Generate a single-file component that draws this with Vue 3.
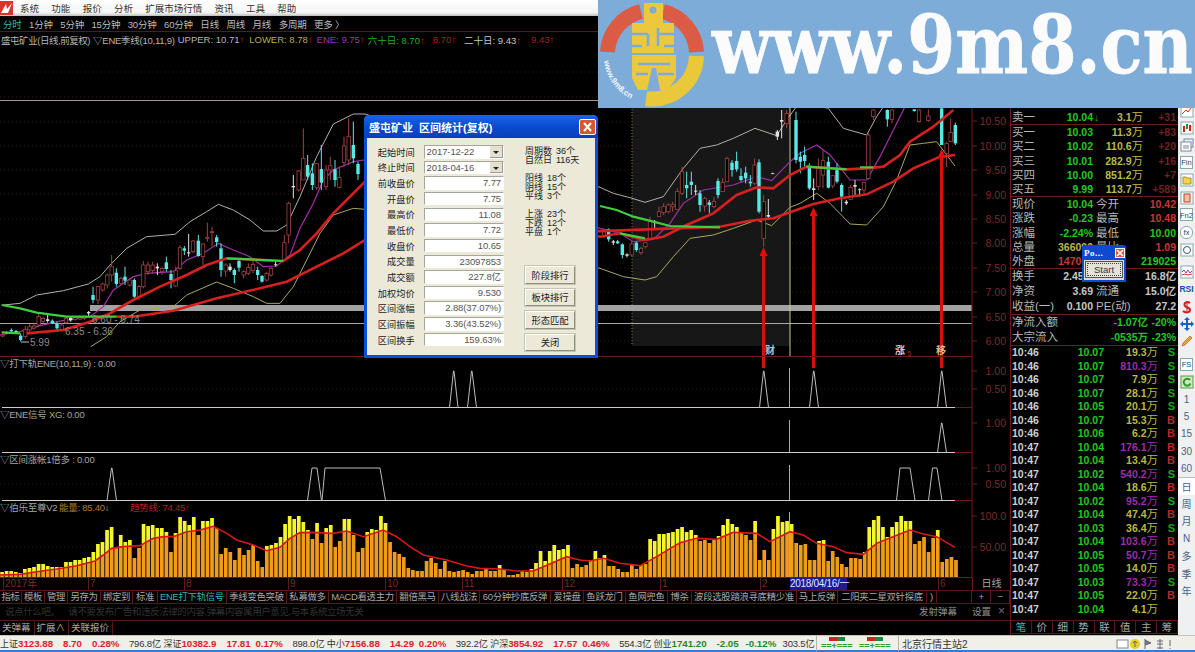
<script setup>
const menus = ['系统', '功能', '报价', '分析', '扩展市场行情', '资讯', '工具', '帮助']
const periods = ['1分钟', '5分钟', '15分钟', '30分钟', '60分钟', '日线', '周线', '月线', '多周期', '更多 〉']

// 坐标都是从放大图读出来的: 左半 x/3, 右半 600+x/3, y=100+y/3
const L = (x, y) => [x / 3, 100 + y / 3]
const R = (x, y) => [600 + x / 3, 100 + y / 3]
const poly = (left, right = []) =>
  [...left.map(p => L(p[0], p[1])), ...right.map(p => R(p[0], p[1]))].map(p => p.join(',')).join(' ')

const upper = poly(
  [[10, 615], [60, 610], [110, 585], [190, 572], [265, 552], [300, 530], [330, 495], [380, 445], [440, 410], [525, 403], [570, 365], [620, 335], [655, 313], [700, 330], [750, 360], [790, 393], [830, 393], [860, 375], [900, 290], [950, 170], [1000, 72], [1060, 42], [1095, 42]],
  [[0, 262], [40, 280], [90, 293], [135, 307], [190, 290], [250, 205], [300, 145], [350, 135], [400, 115], [465, 85], [530, 107], [560, 60], [600, 5], [685, 25], [730, 85], [800, 105], [830, 50], [850, 20]]
)
const lower = poly(
  [[272, 740], [320, 710], [360, 665], [420, 630], [520, 620], [560, 585], [650, 546], [700, 565], [760, 590], [800, 610], [840, 610], [880, 560], [920, 480], [960, 400], [1000, 345], [1060, 325], [1095, 328]],
  [[0, 505], [70, 530], [135, 540], [170, 530], [220, 470], [270, 415], [340, 405], [400, 385], [470, 360], [515, 377], [570, 322], [600, 310], [650, 280], [690, 310], [750, 372], [800, 375], [850, 320], [890, 240], [930, 135], [970, 130], [1010, 125], [1040, 165], [1065, 198]]
)
const mid = poly(
  [[0, 705], [60, 695], [110, 680], [170, 665], [270, 650], [310, 620], [340, 570], [400, 530], [440, 520], [520, 515], [560, 480], [610, 460], [655, 430], [700, 450], [750, 470], [790, 500], [830, 498], [870, 465], [900, 385], [940, 310], [970, 240], [1000, 210], [1060, 185], [1090, 180]],
  [[0, 385], [60, 400], [100, 425], [160, 418], [210, 370], [250, 310], [310, 270], [400, 255], [470, 230], [515, 242], [570, 185], [600, 160], [650, 135], [690, 165], [750, 240], [800, 240], [840, 170], [900, 50], [920, 10]]
)
const ma20 = poly(
  [[80, 700], [190, 690], [270, 665], [330, 640], [400, 600], [480, 560], [560, 525], [620, 495], [680, 475], [850, 483], [900, 450], [950, 400], [1000, 340], [1050, 290], [1095, 245]],
  [[0, 410], [60, 400], [130, 420], [190, 410], [260, 375], [340, 340], [410, 285], [470, 262], [520, 265], [570, 225], [620, 200], [740, 208], [800, 205], [850, 200], [900, 165], [930, 125], [1000, 80], [1060, 30]]
)
const ma60 = poly(
  [[350, 650], [400, 650], [520, 632], [650, 595], [780, 565], [860, 545], [950, 500], [1030, 460], [1095, 420]],
  [[360, 380], [450, 362], [520, 355], [640, 312], [720, 295], [800, 283], [880, 245], [940, 205], [1020, 170], [1065, 165]]
)
const greens = [
  poly([[5, 615], [60, 625], [110, 638], [200, 650], [270, 650], [350, 650]]),
  poly([[5, 697], [60, 700]]),
  poly([[680, 475], [850, 483]]),
  poly([], [[0, 318], [50, 330], [100, 350], [160, 365], [210, 378], [360, 382]]),
  poly([], [[60, 400], [135, 415]]),
  poly([], [[620, 200], [740, 208]]),
  poly([], [[780, 202], [820, 202]])
]

// [x, 影线上, 影线下, 实体上, 实体下, 类型]
const leftCandles = [
  [8, 700, 712, 704, 708, 'r'], [20, 693, 702, 696, 700, 'c'], [34, 685, 697, 690, 694, 'c'], [48, 690, 700, 693, 697, 'c'], [62, 700, 725, 707, 720, 'c'], [76, 678, 715, 688, 710, 'r'], [89, 672, 695, 680, 690, 'r'], [102, 670, 690, 678, 684, 'r'], [116, 640, 680, 650, 675, 'r'], [129, 650, 668, 655, 664, 'r'], [143, 642, 668, 658, 663, 'w'], [157, 658, 672, 662, 670, 'c'], [171, 665, 690, 670, 685, 'c'], [185, 670, 692, 675, 688, 'r'], [198, 650, 672, 655, 668, 'r'], [212, 650, 665, 654, 661, 'w'], [226, 650, 662, 653, 658, 'r'], [240, 650, 660, 652, 657, 'r'], [253, 648, 660, 651, 655, 'r'], [266, 633, 650, 636, 640, 'w'],
  [279, 560, 610, 585, 600, 'c'], [294, 558, 612, 560, 600, 'r'], [308, 548, 575, 552, 570, 'r'], [322, 520, 565, 525, 555, 'r'], [335, 465, 545, 500, 525, 'r'], [349, 505, 560, 518, 552, 'c'], [363, 530, 555, 535, 550, 'r'], [375, 500, 555, 530, 542, 'c'], [389, 535, 560, 540, 555, 'r'], [403, 535, 600, 540, 590, 'c'], [417, 555, 600, 560, 592, 'r'], [430, 483, 565, 495, 560, 'r'], [444, 485, 525, 495, 515, 'r'], [458, 485, 520, 495, 512, 'r'], [472, 490, 525, 500, 505, 'w'], [486, 500, 525, 505, 515, 'r'], [499, 470, 515, 487, 507, 'c'], [513, 510, 565, 522, 540, 'c'], [527, 500, 560, 512, 558, 'r'], [540, 435, 510, 443, 505, 'r'], [553, 438, 465, 445, 452, 'c'], [566, 402, 470, 457, 460, 'w'], [579, 420, 460, 423, 455, 'r'], [595, 405, 470, 422, 468, 'c'], [609, 430, 495, 432, 470, 'r'], [622, 368, 425, 412, 415, 'r'], [636, 380, 440, 395, 398, 'r'], [650, 405, 440, 412, 426, 'c'], [663, 430, 530, 445, 510, 'c'], [677, 490, 530, 495, 513, 'r'], [690, 490, 515, 500, 510, 'w'], [703, 505, 550, 510, 525, 'c'], [717, 478, 515, 483, 503, 'c'], [731, 510, 535, 515, 525, 'r'], [745, 490, 525, 502, 520, 'r'], [759, 480, 520, 493, 512, 'r'], [773, 500, 540, 510, 525, 'c'], [786, 525, 548, 528, 545, 'c'], [800, 515, 545, 520, 540, 'r'], [813, 500, 530, 505, 525, 'r'], [827, 480, 500, 493, 495, 'w'],
  [853, 405, 480, 428, 480, 'r'], [866, 305, 430, 310, 405, 'r'], [880, 225, 295, 258, 262, 'w'], [896, 210, 275, 213, 270, 'r'], [910, 85, 240, 175, 240, 'r'], [923, 165, 240, 195, 230, 'c'], [937, 190, 270, 220, 255, 'c'], [950, 190, 270, 190, 262, 'r'], [964, 135, 270, 207, 248, 'c'], [978, 195, 270, 210, 260, 'r'], [991, 170, 240, 197, 210, 'r'], [1005, 180, 260, 208, 240, 'c'], [1018, 200, 265, 232, 262, 'r'], [1032, 110, 200, 138, 188, 'r'], [1046, 55, 195, 110, 180, 'r'], [1060, 65, 190, 135, 175, 'c'], [1074, 185, 240, 192, 222, 'c']
]
const rightCandles = [
  [12, 385, 415, 395, 410, 'r'], [26, 385, 425, 388, 418, 'c'], [40, 420, 435, 424, 428, 'w'], [53, 420, 432, 424, 430, 'c'], [67, 430, 475, 433, 465, 'c'], [81, 460, 472, 463, 467, 'w'], [95, 425, 468, 432, 465, 'r'], [109, 425, 455, 428, 450, 'c'], [123, 440, 465, 445, 458, 'r'], [136, 425, 445, 428, 440, 'r'], [150, 350, 420, 365, 418, 'r'], [164, 360, 390, 365, 368, 'w'], [177, 320, 350, 335, 350, 'r'], [191, 310, 345, 320, 338, 'r'], [205, 310, 340, 315, 335, 'r'], [218, 305, 335, 313, 320, 'r'], [232, 265, 330, 275, 328, 'r'], [246, 200, 285, 215, 280, 'r'], [260, 215, 295, 255, 265, 'c'], [274, 215, 285, 245, 255, 'c'], [287, 255, 285, 272, 275, 'w'], [300, 270, 335, 280, 315, 'c'], [314, 290, 335, 295, 318, 'r'], [328, 300, 340, 307, 315, 'c'], [342, 290, 325, 305, 320, 'r'], [354, 235, 295, 243, 285, 'c'], [368, 235, 275, 248, 275, 'r'], [381, 170, 245, 175, 245, 'r'], [396, 180, 230, 188, 210, 'c'], [410, 155, 215, 183, 208, 'c'], [423, 205, 245, 228, 240, 'c'], [437, 200, 250, 218, 235, 'c'], [451, 225, 260, 245, 250, 'c'], [464, 175, 255, 195, 250, 'r'], [477, 178, 340, 187, 335, 'c'], [491, 285, 440, 305, 415, 'r'], [505, 297, 360, 345, 350, 'w'], [518, 218, 222, 220, 221, 'w'], [532, 90, 120, 95, 110, 'w'], [545, 30, 115, 60, 65, 'w'], [560, 30, 85, 40, 70, 'r'],
  [588, 35, 190, 60, 180, 'c'], [601, 155, 220, 170, 185, 'c'], [614, 140, 205, 165, 183, 'c'], [628, 190, 270, 203, 265, 'c'], [641, 235, 300, 265, 270, 'w'], [655, 175, 270, 205, 260, 'r'], [669, 150, 265, 182, 225, 'r'], [685, 170, 265, 185, 263, 'c'], [698, 225, 265, 227, 258, 'r'], [711, 190, 250, 205, 245, 'c'], [725, 250, 335, 255, 290, 'c'], [739, 300, 315, 305, 310, 'w'], [752, 255, 300, 262, 298, 'r'], [765, 240, 290, 255, 260, 'w'], [779, 265, 290, 268, 270, 'w'], [792, 245, 280, 248, 270, 'r'], [805, 100, 240, 105, 235, 'r'], [820, 28, 60, 30, 50, 'r'], [862, 28, 80, 30, 58, 'c'], [876, 28, 70, 30, 58, 'r'], [943, 28, 35, 28, 33, 'c'], [957, 28, 68, 30, 65, 'r'], [985, 28, 65, 48, 62, 'r'], [1025, 25, 135, 25, 135, 'c'], [1040, 125, 200, 130, 160, 'r'], [1052, 55, 125, 97, 125, 'r'], [1066, 68, 135, 75, 130, 'c']
]
const candles = [
  ...leftCandles.map(c => ({ x: c[0] / 3, wt: 100 + c[1] / 3, wb: 100 + c[2] / 3, bt: 100 + c[3] / 3, bb: 100 + c[4] / 3, t: c[5] })),
  ...rightCandles.map(c => ({ x: 600 + c[0] / 3, wt: 100 + c[1] / 3, wb: 100 + c[2] / 3, bt: 100 + c[3] / 3, bb: 100 + c[4] / 3, t: c[5] }))
]

const gridY = [72, 97, 122, 146, 170, 194, 219, 243, 268, 292, 317, 341]
const priceAxis = [['10.50', 121], ['10.00', 146], ['9.50', 170], ['9.00', 195], ['8.50', 219], ['8.00', 243], ['7.50', 268], ['7.00', 292], ['6.50', 317], ['6.00', 341]]
const subAxis = [['1.00', 371], ['0.50', 389], ['1.00', 423], ['1.00', 468], ['0.50', 484], ['100.0', 516], ['50.00', 547]]

const spike = (a, b, c, d, top, base) => `${a},${base} ${b},${top} ${c},${top} ${d},${base}`
const sub1 = [[449.5, 453.5, 454, 458], [467.5, 471.5, 472, 476.5], [759.5, 763.5, 764, 768.5], [809.5, 813.5, 814, 818.5], [937.5, 941.5, 942, 946.5]].map(s => spike(...s, 371, 407.5))
const sub2 = [spike(937.5, 941.5, 942, 946.5, 423, 452.5)]
const sub3 = [[107, 111.5, 112, 116.5], [307.5, 312, 317, 321.5], [322, 325, 380, 385.5], [896.5, 900, 910, 915], [928.5, 932.5, 937, 942]].map(s => spike(...s, 468, 500.5))

const arrows = [
  { x: 763.5, tip: 247 },
  { x: 813.5, tip: 207 },
  { x: 941.5, tip: 149 }
]

const trendPts = [[0, 660], [60, 658], [110, 650], [170, 642], [230, 632], [285, 618], [310, 600], [335, 580], [370, 575], [420, 572], [460, 550], [490, 545], [520, 545], [560, 530], [600, 525], [640, 514], [680, 535], [710, 555], [760, 570], [800, 587], [840, 577], [870, 550], [900, 533], [940, 532], [1000, 535], [1040, 528], [1090, 545], [1150, 525], [1190, 545], [1230, 575], [1270, 600], [1340, 615], [1400, 633], [1440, 640], [1500, 642]]
  .map(p => [p[0] / 3, 355 + p[1] / 3])
  .concat([[50, 648], [100, 648], [130, 635], [200, 605], [240, 615], [270, 618], [310, 610], [360, 625], [420, 632], [470, 605], [540, 563], [590, 550], [650, 553], [700, 532], [770, 535], [810, 560], [870, 530], [910, 540], [950, 565], [1000, 575], [1040, 593], [1090, 598], [1130, 565], [1160, 553], [1230, 525], [1270, 537], [1310, 545], [1365, 577]].map(p => [500 + p[0] / 3, 355 + p[1] / 3]))
const trend = trendPts.map(p => p.join(',')).join(' ')
const trendAt = x => {
  for (let i = 1; i < trendPts.length; i++) {
    const [x0, y0] = trendPts[i - 1]
    const [x1, y1] = trendPts[i]
    if (x <= x1) return y0 + ((y1 - y0) * (x - x0)) / (x1 - x0)
  }
  return 547
}
const BASE = 577
const volLeft = [5, 6, 6, 5, 4, 8, 9, 10, 13, 13, 11, 10, 10, 10, 15, 15, 17, 17, 19, 20, 25, 33, 35, 47, 50, 29, 42, 35, 37, 19, 29, 53, 51, 52, 49, 49, 45, 25, 44, 60, 56, 52, 60, 42, 56, 56, 59, 49, 23, 29, 25, 17, 29, 22, 27, 32, 16, 10, 31, 32, 34, 40, 53, 61, 58, 61, 55, 47, 38, 54, 34, 49, 52, 30, 36, 58, 58, 42, 25, 29, 45, 48, 47, 61, 54, 35, 25, 23, 20, 9, 7, 6, 6, 16, 19, 14, 8, 16, 6, 5, 6, 7, 5, 3, 6, 6, 8, 6, 6, 12]
const volRight = [7, 2, 2, 3, 6, 5, 8, 14, 26, 16, 26, 32, 27, 28, 32, 9, 13, 10, 12, 17, 26, 19, 22, 11, 11, 8, 5, 5, 12, 8, 12, 13, 38, 36, 43, 43, 44, 45, 48, 50, 45, 47, 42, 36, 37, 34, 37, 41, 52, 58, 53, 50, 45, 42, 37, 56, 17, 27, 17, 48, 61, 55, 56, 53, 34, 32, 33, 17, 17, 36, 37, 16, 26, 20, 13, 10, 19, 19, 18, 25, 50, 57, 61, 50, 40, 50, 55, 61, 56, 56, 33, 36, 40, 25, 39, 47, 15, 18, 20, 17]
const bars = [
  ...volLeft.map((h, i) => ({ x: 0.2 + i * 4.565, h })),
  ...volRight.map((h, i) => ({ x: 502.2 + i * 4.565, h }))
].map(b => {
  const top = BASE - b.h
  const line = trendAt(b.x + 1.8)
  const split = Math.max(top, line)
  return { x: b.x, top, split }
})

const dateTicks = [['2017年', 3], ['7', 88], ['8', 184], ['9', 288], ['10', 385], ['11', 462], ['12', 562], ['1', 660], ['2', 760], ['6', 938]]

const tabs = ['指标', '模板', '管理', '另存为', '绑定到', '标准', 'ENE打下轨信号', '季线变色突破', '私募做多', 'MACD看透主力', '翻倍黑马', '八线战法', '60分钟抄底反弹', '爱操盘', '鱼跃龙门', '鱼网兜鱼', '博杀', '波段选股踏浪寻底精少准', '马上反弹', '二阳夹二星双针探底', ')', '', '+', '−']

const dialogRows = [
  ['起始时间', '2017-12-22', true], ['终止时间', '2018-04-16', true], ['前收盘价', '7.77'], ['开盘价', '7.75'], ['最高价', '11.08'], ['最低价', '7.72'], ['收盘价', '10.65'], ['成交量', '23097853'], ['成交额', '227.8亿'], ['加权均价', '9.530'], ['区间涨幅', '2.88(37.07%)'], ['区间振幅', '3.36(43.52%)'], ['区间换手', '159.63%']
]
const statGroups = [
  [['周期数', '36个'], ['自然日', '116天']],
  [['阳线', '18个'], ['阴线', '15个'], ['平线', '3个']],
  [['上涨', '23个'], ['下跌', '12个'], ['平盘', '1个']]
]
const dialogButtons = ['阶段排行', '板块排行', '形态匹配', '关闭']

const buys = [
  ['买一', '10.03', '11.3', '+83'], ['买二', '10.02', '110.6', '+20'], ['买三', '10.01', '282.9', '+16'], ['买四', '10.00', '851.2', '+7'], ['买五', '9.99', '113.7', '+589']
]
const infoA = [
  ['现价', '10.04', 'green', '今开', '10.42', 'red'], ['涨跌', '-0.23', 'green', '最高', '10.48', 'red'], ['涨幅', '-2.24%', 'green', '最低', '10.00', 'green'], ['总量', '366099', 'yellow', '量比', '1.09', 'red'], ['外盘', '147000', 'red', '内盘', '219025', 'green']
]
const infoB = [['换手', '2.45%', '股本', '16.8亿'], ['净资', '3.69', '流通', '15.0亿'], ['收益(一)', '0.100', 'PE(动)', '27.2']]
const flows = [['净流入额', '-1.07亿', '-20%'], ['大宗流入', '-0535万', '-23%']]
const trades = [
  ['10:46', '10.07', '19.3', 'S'], ['10:46', '10.07', '810.3', 'S'], ['10:46', '10.07', '7.9', 'S'], ['10:46', '10.07', '28.1', 'S'], ['10:46', '10.05', '20.1', 'S'], ['10:46', '10.07', '15.3', 'B'], ['10:46', '10.06', '6.2', 'B'], ['10:47', '10.04', '176.1', 'B'], ['10:47', '10.04', '13.4', 'B'], ['10:47', '10.02', '540.2', 'S'], ['10:47', '10.04', '18.6', 'B'], ['10:47', '10.02', '95.2', 'S'], ['10:47', '10.04', '47.4', 'B'], ['10:47', '10.03', '36.4', 'S'], ['10:47', '10.04', '103.6', 'B'], ['10:47', '10.05', '50.7', 'B'], ['10:47', '10.05', '14.0', 'B'], ['10:47', '10.03', '73.3', 'S'], ['10:47', '10.05', '22.0', 'B'], ['10:47', '10.04', '4.1', '']
]
const quoteTabs = ['笔', '价', '细', '势', '联', '值', '主', '筹']
const railText = ['1', '5', '15', '30', '60', '日', '周', '月', 'N', '多', '季', '年']

const indices = [
  ['上证', '3123.88', '8.70', '0.28%', '796.8亿', 'up'],
  ['深证', '10382.9', '17.81', '0.17%', '898.0亿', 'up'],
  ['中小', '7156.88', '14.29', '0.20%', '392.2亿', 'up'],
  ['沪深', '3854.92', '17.57', '0.46%', '554.3亿', 'up'],
  ['创业', '1741.20', '-2.05', '-0.12%', '303.5亿', 'down']
]
</script>

<template>
  <div class="app">
    <header class="menubar">
      <svg class="app-logo" width="13" height="14" viewBox="0 0 13 14">
        <rect width="13" height="14" fill="#d8352a" />
        <path d="M1 12 L6 3 L7 8 L12 2 L8 12 Z" fill="#fff" />
      </svg>
      <span v-for="m in menus" :key="m">{{ m }}</span>
    </header>

    <div class="body">
      <section class="left">
        <nav class="periods">
          <span class="cyan">分时</span>
          <span v-for="p in periods" :key="p">{{ p }}</span>
        </nav>
        <div class="chart-title">
          <span class="t-name">盛屯矿业(日线,前复权)</span>
          <span class="t-ene">▽ENE季线(10,11,9)</span>
          <span class="t-upper">UPPER: 10.71<i>↑</i></span>
          <span class="t-lower">LOWER: 8.78<i>↑</i></span>
          <span class="t-mid">ENE: 9.75<i>↑</i></span>
          <span class="t-green">六十日: 8.70<i>↑</i></span>
          <span class="t-red">8.70<i>↑</i></span>
          <span class="t-white">二十日: 9.43<i>↑</i></span>
          <span class="t-red2">9.43<i>↑</i></span>
        </div>

        <svg class="chart" width="1010" height="531" viewBox="0 47 1010 531">
          <line v-for="y in gridY" :key="y" x1="0" x2="972" :y1="y" :y2="y" class="grid" />
          <line v-for="y in [389, 484, 547]" :key="y" x1="0" x2="972" :y1="y" :y2="y" class="grid" />
          <rect x="632" y="100" width="158" height="246" fill="#171717" />
          <line x1="632" x2="632" y1="100" y2="346" class="dot-v" />
          <line x1="0" x2="600" y1="100.5" y2="100.5" stroke="#9a9a9a" />
          <rect x="90" y="305" width="882" height="6" fill="#a3a3a3" />
          <line x1="0" x2="972" y1="323.5" y2="323.5" stroke="#a8a8a8" />
          <line x1="790" x2="790" y1="100" y2="356" stroke="#c9c998" />

          <polyline :points="upper" class="l-white" />
          <polyline :points="lower" class="l-yellow" />
          <polyline :points="mid" class="l-mid" />
          <g v-for="(c, i) in candles" :key="i">
            <line :x1="c.x" :x2="c.x" :y1="c.wt" :y2="c.wb" :class="'w-' + c.t" />
            <rect :x="c.x - 1.7" :y="c.bt" width="3.4" :height="Math.max(c.bb - c.bt, 0.8)" :class="'b-' + c.t" />
          </g>
          <polyline :points="ma20" class="l-red" />
          <polyline :points="ma60" class="l-red" />
          <polyline v-for="(g, i) in greens" :key="i" :points="g" class="l-green" />

          <text x="30" y="346" class="lbl">5.99</text>
          <line x1="21" x2="29" y1="342" y2="342" stroke="#bbb" />
          <text x="65" y="335" class="lbl">6.35 - 6.36</text>
          <text x="92" y="323" class="lbl">6.60 - 6.74</text>

          <g v-for="a in arrows" :key="a.x">
            <line :x1="a.x" :x2="a.x" y1="368" :y2="a.tip + 8" class="arrow" />
            <polygon :points="`${a.x - 4},${a.tip + 9} ${a.x},${a.tip} ${a.x + 4},${a.tip + 9}`" fill="#e40c0c" />
          </g>
          <text x="765" y="354" class="tag tag-cai">财</text>
          <text x="895" y="354" class="tag tag-zhang">涨</text>
          <text x="907" y="356" class="tag-five">5</text>
          <text x="936" y="354" class="tag tag-yi">移</text>

          <line x1="0" x2="972" y1="356.5" y2="356.5" class="red" />
          <line x1="2" x2="972" y1="407.5" y2="407.5" class="red" />
          <line x1="2" x2="972" y1="452.5" y2="452.5" class="red" />
          <line x1="2" x2="972" y1="500.5" y2="500.5" class="red" />
          <line x1="0" x2="972" y1="577.5" y2="577.5" class="red" />
          <line x1="2" x2="955" y1="407.5" y2="407.5" class="base" />
          <line x1="2" x2="955" y1="452.5" y2="452.5" class="base" />
          <line x1="2" x2="955" y1="500.5" y2="500.5" class="base" />
          <line x1="789.5" x2="789.5" y1="368" y2="407" stroke="#aaa" />
          <line x1="789.5" x2="789.5" y1="420" y2="452" stroke="#aaa" />
          <line x1="789.5" x2="789.5" y1="465" y2="500" stroke="#aaa" />
          <line x1="789.5" x2="789.5" y1="512" y2="577" stroke="#aaa" />
          <polyline v-for="(s, i) in [...sub1, ...sub2, ...sub3]" :key="i" :points="s" class="spike" />

          <text x="0" y="367" class="h">▽打下轨ENE(10,11,9) : 0.00</text>
          <text x="0" y="418" class="h">▽ENE信号 XG: 0.00</text>
          <text x="0" y="463" class="h">▽区间涨帐1倍多 : 0.00</text>
          <text x="0" y="511" class="h">▽伯乐至尊V2</text>
          <text x="59" y="511" class="h h-o">能量: 85.40<tspan fill="#45c8e0">↓</tspan></text>
          <text x="130" y="511" class="h h-r">趋势线: 74.45<tspan>↑</tspan></text>

          <g v-for="(b, i) in bars" :key="'v' + i">
            <rect :x="b.x" :y="b.top" width="3.7" :height="Math.max(b.split - b.top, 0)" fill="#f6f62e" />
            <rect :x="b.x" :y="b.split" width="3.7" :height="BASE - b.split" fill="#f09c1a" />
          </g>
          <polyline :points="trend" class="l-trend" />

          <line x1="972" x2="972" y1="47" y2="578" class="red" />
          <g v-for="a in priceAxis" :key="a[1]">
            <line x1="972" x2="977" :y1="a[1]" :y2="a[1]" class="red" />
            <text x="1006" :y="a[1] + 4" class="axis">{{ a[0] }}</text>
          </g>
          <g v-for="a in subAxis" :key="a[1]">
            <line x1="972" x2="977" :y1="a[1]" :y2="a[1]" class="red" />
            <text x="1006" :y="a[1] + 4" class="axis">{{ a[0] }}</text>
          </g>
        </svg>

        <div class="dates">
          <span v-for="d in dateTicks" :key="d[0]" class="tick" :style="{ left: d[1] + 'px' }">{{ d[0] }}</span>
          <span class="cursor-date">2018/04/16/一</span>
          <span class="day-kind">日线</span>
        </div>
        <div class="tabs">
          <span v-for="(t, i) in tabs" :key="i" :class="{ cyan: t === 'ENE打下轨信号' }">{{ t }}</span>
        </div>
        <div class="danmu">
          <span class="danmu-hint">说点什么吧。&nbsp;&nbsp;&nbsp;&nbsp;请不要发布广告和违反法律的内容,弹幕内容属用户意见,与本系统立场无关</span>
          <span class="danmu-send">发射弹幕</span>
          <span class="danmu-set">设置</span>
          <span class="danmu-x">×</span>
        </div>
        <div class="danmu-tools">
          <span>关弹幕</span><span>扩展∧</span><span>关联报价</span>
        </div>
      </section>

      <aside class="quotes">
        <div class="q-sec">
          <div class="q-row">
            <span class="lab">卖一</span>
            <b class="c1 green">10.04<i class="down-arrow">↓</i></b>
            <b class="c2 yellow">3.1<em>万</em></b>
            <b class="c3 dim">+31</b>
          </div>
        </div>
        <div class="q-sec">
          <div v-for="r in buys" :key="r[0]" class="q-row">
            <span class="lab">{{ r[0] }}</span>
            <b class="c1 green">{{ r[1] }}</b>
            <b class="c2 yellow">{{ r[2] }}<em>万</em></b>
            <b class="c3 dim">{{ r[3] }}</b>
          </div>
        </div>
        <div class="q-sec">
          <div v-for="r in infoA" :key="r[0]" class="q-row">
            <span class="lab">{{ r[0] }}</span>
            <b class="c1" :class="r[2]">{{ r[1] }}</b>
            <span class="lab2">{{ r[3] }}</span>
            <b class="c3" :class="r[5]">{{ r[4] }}</b>
          </div>
        </div>
        <div class="q-sec tall">
          <div v-for="r in infoB" :key="r[0]" class="q-row">
            <span class="lab">{{ r[0] }}</span>
            <b class="c1 light">{{ r[1] }}</b>
            <span class="lab2">{{ r[2] }}</span>
            <b class="c3 light">{{ r[3] }}</b>
          </div>
        </div>
        <div class="q-sec flows">
          <div v-for="r in flows" :key="r[0]" class="q-row">
            <span class="lab">{{ r[0] }}</span>
            <b class="fl green">{{ r[1] }}</b>
            <b class="c3 green">{{ r[2] }}</b>
          </div>
        </div>
        <div class="trades">
          <div v-for="(t, i) in trades" :key="i" class="t-row">
            <b class="time">{{ t[0] }}</b>
            <b class="price">{{ t[1] }}</b>
            <b class="vol" :class="{ big: parseFloat(t[2]) > 50 }">{{ t[2] }}<em>万</em></b>
            <b class="side" :class="t[3] === 'S' ? 'green' : 'sell'">{{ t[3] }}</b>
          </div>
        </div>
        <div class="q-tabs">
          <span v-for="(q, i) in quoteTabs" :key="q" :class="{ cyan: i === 0 }">{{ q }}</span>
        </div>
      </aside>

      <aside class="rail">
        <i class="r-ico"><svg width="14" height="14" viewBox="0 0 14 14"><rect x="1" y="1" width="12" height="12" fill="#fff" stroke="#8aa" /><path d="M2 10 L6 6 L8 8 L12 3" fill="none" stroke="#c33" /></svg></i>
        <i class="r-ico"><svg width="14" height="14" viewBox="0 0 14 14"><rect x="1" y="1" width="12" height="12" fill="#fff" stroke="#8aa" /><rect x="3" y="5" width="2" height="6" fill="#c22" /><rect x="6" y="3" width="2" height="5" fill="#292" /><rect x="9" y="4" width="2" height="6" fill="#c22" /></svg></i>
        <i class="r-ico"><svg width="14" height="14" viewBox="0 0 14 14"><rect x="4" y="1" width="9" height="8" fill="#eef" stroke="#789" /><rect x="1" y="4" width="10" height="9" fill="#fff" stroke="#789" /><path d="M3 8h6M3 10h6" stroke="#789" /></svg></i>
        <span class="r-box">Fin</span>
        <i class="r-ico"><svg width="14" height="14" viewBox="0 0 14 14"><rect x="1" y="1" width="12" height="12" fill="#fff" stroke="#8aa" /><path d="M3 4h3l1 1h4v6H3z" fill="#f2d34f" stroke="#b09020" /></svg></i>
        <i class="r-ico"><svg width="14" height="14" viewBox="0 0 14 14"><rect x="1" y="1" width="12" height="12" fill="#fff" stroke="#8aa" /><rect x="4" y="3" width="6" height="8" fill="#f4c4a0" stroke="#c33" /></svg></i>
        <span class="r-box">Fn2</span>
        <span class="r-box round">fx</span>
        <i class="r-ico"><svg width="14" height="14" viewBox="0 0 14 14"><rect x="1" y="1" width="12" height="12" fill="#fff" stroke="#8aa" /><circle cx="7" cy="7" r="3.5" fill="none" stroke="#357" /></svg></i>
        <i class="r-ico gap1"><svg width="14" height="14" viewBox="0 0 14 14"><rect x="1" y="1" width="12" height="12" fill="#fff" stroke="#8aa" /><path d="M2 7 L4 5 L6 8 L8 5 L10 8 L12 6" fill="none" stroke="#a3a" /><path d="M2 10 L5 9 L8 10 L12 9" fill="none" stroke="#c33" /></svg></i>
        <span class="r-rsi">RSI</span>
        <i class="r-ico"><svg width="14" height="14" viewBox="0 0 14 14"><path d="M10 3 C7 1 3 3 5 6 C6 8 10 7 10 10 C10 13 5 13 3 11" fill="none" stroke="#c22" stroke-width="2" /><path d="M7 1v12" stroke="#c22" /></svg></i>
        <i class="r-ico"><svg width="14" height="14" viewBox="0 0 14 14"><path d="M7 0 L10 3 H8 V6 H11 V4 L14 7 L11 10 V8 H8 V11 H10 L7 14 L4 11 H6 V8 H3 V10 L0 7 L3 4 V6 H6 V3 H4 Z" fill="#1a5fc0" /></svg></i>
        <i class="r-ico"><svg width="14" height="14" viewBox="0 0 14 14"><path d="M2 12 L3 9 L10 2 L12 4 L5 11 Z" fill="#e8a040" stroke="#a86a20" stroke-width=".7" /></svg></i>
        <span class="r-box gap2">FS</span>
        <i class="r-ico"><svg width="14" height="14" viewBox="0 0 14 14"><rect x="1" y="1" width="12" height="12" fill="#cfe8c0" stroke="#5a9a4a" /><path d="M10 5 A3.5 3.5 0 1 0 10.5 8.5" fill="none" stroke="#2a9a2a" stroke-width="2" /></svg></i>
        <span v-for="t in railText" :key="t" class="r-txt" :class="{ on: t === '日' }">{{ t }}</span>
      </aside>
    </div>

    <footer class="status">
      <template v-for="x in indices" :key="x[0]">
        <span class="s-cell">
          <span class="s-name">{{ x[0] }}</span><b :class="x[5]">{{ x[1] }}</b>
          <b :class="x[5]" class="s-chg">{{ x[2] }}</b>
          <b :class="x[5]" class="s-pct">{{ x[3] }}</b>
          <span class="s-amt">{{ x[4] }}</span>
        </span>
      </template>
      <span class="s-sep"></span>
      <span class="s-meter" v-for="n in 2" :key="n"><i class="m-r"></i><i class="m-g"></i><em>==+===</em></span>
      <span class="s-sep2"></span>
      <span class="s-site">北京行情主站2</span>
      <span class="s-icons">
        <svg width="60" height="12" viewBox="0 0 60 12">
          <rect x="1" y="2" width="11" height="8" fill="#fff" stroke="#888" />
          <circle cx="19" cy="6" r="5" fill="#e8d020" /><path d="M19 3v6M17 5l2-2 2 2" stroke="#666" fill="none" />
          <path d="M29 1v10M29 2l6 3-6 2" fill="#778" stroke="#667" />
          <path d="M41 3h6M41 6h6M44 1v10M41 10h6" stroke="#667" fill="none" />
          <path d="M54 2v6M54 10v1" stroke="#667" />
        </svg>
      </span>
    </footer>

    <div class="banner">
      <svg width="597" height="108" viewBox="0 0 597 108">
        <path d="M9.5 52 A44.5 44.5 0 0 1 43 11.4" class="ring red-ring" />
        <path d="M65 11.4 A44.5 44.5 0 0 1 98.5 52" class="ring red-ring" />
        <path d="M98.5 56 A44.5 44.5 0 0 1 48 98.6" class="ring yellow-ring" />
        <path id="ring-text" d="M6 61 A49 49 0 0 0 46 103" fill="none" />
        <text class="ring-text"><textPath href="#ring-text">www.9m8.cn</textPath></text>
        <path d="M46 3 H65 V23 H76 V53 H34 V23 H46 Z" fill="#ecc93c" />
        <path d="M34 55 H78 V78 L70 90 H62 L58 68 H54 L49 90 H40 L34 78 Z" fill="#ecc93c" />
        <circle cx="55" cy="10" r="3.5" fill="#7eacd9" />
        <path d="M34 34 H50 M60 34 H76 M50 34 V46 M60 28 V46 M34 46 H44 M66 46 H76 M40 64 H72 M38 74 H50 M60 74 H76" stroke="#7eacd9" stroke-width="2.6" fill="none" />
        <text transform="translate(114 73) scale(1.046 1.21)" class="site">www.9m8.cn</text>
      </svg>
    </div>

    <div class="dialog">
      <div class="d-title">
        <span>盛屯矿业&nbsp;&nbsp;区间统计(复权)</span>
        <i class="d-close">
          <svg width="15" height="14" viewBox="0 0 15 14"><path d="M4 3 L11 11 M11 3 L4 11" stroke="#fff" stroke-width="2" /></svg>
        </i>
      </div>
      <div class="d-body">
        <div class="d-form">
          <div v-for="r in dialogRows" :key="r[0]" class="d-row">
            <label>{{ r[0] }}</label>
            <div class="d-input" :class="{ date: r[2] }">
              <span>{{ r[1] }}</span>
              <i v-if="r[2]" class="d-drop"></i>
            </div>
          </div>
        </div>
        <div class="d-side">
          <div v-for="(g, i) in statGroups" :key="i" class="d-stat">
            <p v-for="s in g" :key="s[0]"><span>{{ s[0] }}</span><span>{{ s[1] }}</span></p>
          </div>
          <div class="d-btns">
            <button v-for="b in dialogButtons" :key="b">{{ b }}</button>
          </div>
        </div>
      </div>
    </div>

    <div class="popup">
      <div class="p-title"><span>Po...</span><i class="p-close"><svg width="10" height="10" viewBox="0 0 10 10"><path d="M2 2 L8 8 M8 2 L2 8" stroke="#fff" stroke-width="1.6" /></svg></i></div>
      <div class="p-body"><button>Start</button></div>
    </div>
  </div>
</template>

<style>
html, body {
  margin: 0;
  background: #000;
  overflow: hidden;
}
</style>

<style scoped>
.app {
  position: relative;
  width: 1195px;
  height: 652px;
  overflow: hidden;
  background: #000;
  color: #bdbdbd;
  font-family: "Liberation Sans", "Noto Sans CJK SC", sans-serif;
  font-size: 10px;
  display: flex;
  flex-direction: column;
}
i, em { font-style: normal; }
.cyan { color: #35b8b8; }
.green { color: #22c822; }
.red { color: #e04040; }
.yellow { color: #b9b94a; }
.light { color: #c8c8c8; }
.dim { color: #6e2222; }

/* 菜单 */
.menubar {
  height: 16px;
  flex: none;
  display: flex;
  align-items: center;
  gap: 12.3px;
  background: linear-gradient(#fff, #f4f4f4 80%, #bdbdbd);
  color: #333;
  font-size: 9.5px;
  padding-left: 20px;
  position: relative;
  box-sizing: border-box;
}
.app-logo { position: absolute; left: 0; top: 1px; }

.body {
  flex: none;
  height: 619px;
  display: flex;
}
.left {
  width: 1010px;
  flex: none;
  display: flex;
  flex-direction: column;
}
.periods {
  height: 16px;
  box-sizing: border-box;
  border-bottom: 1px solid #5c1616;
  display: flex;
  align-items: center;
  gap: 7.5px;
  padding-left: 3px;
  font-size: 9.5px;
  letter-spacing: -0.2px;
}
.chart-title {
  height: 15px;
  display: flex;
  align-items: center;
  font-size: 9.5px;
  white-space: nowrap;
  color: #b5b5b5;
}
.chart-title i { color: #c22; }
.t-name { margin-left: 1px; letter-spacing: -0.45px; }
.t-ene { margin-left: 3px; letter-spacing: -0.25px; }
.t-upper { margin-left: 3px; }
.t-lower { margin-left: 5px; color: #b0b050; }
.t-mid { margin-left: 4px; color: #a030b0; }
.t-green { margin-left: 3px; color: #22b022; }
.t-red { margin-left: 8px; color: #a82222; }
.t-white { margin-left: 8px; color: #c8c8c8; }
.t-red2 { margin-left: 10px; color: #a82222; }

.chart { display: block; flex: none; font-family: "Liberation Sans", "Noto Sans CJK SC", sans-serif; }
.grid { stroke: #3f1010; stroke-dasharray: 1 3; }
.dot-v { stroke: #7c7c3a; stroke-dasharray: 1 2; }
.chart .red { stroke: #6e1a1a; }
.base { stroke: #d8c8c8; }
.l-white { fill: none; stroke: #b0b0a8; stroke-width: 1; }
.l-yellow { fill: none; stroke: #a8a860; stroke-width: 1; }
.l-mid { fill: none; stroke: #a030a8; stroke-width: 1.2; }
.l-red { fill: none; stroke: #d82020; stroke-width: 2.6; }
.l-green { fill: none; stroke: #3ecf3e; stroke-width: 2.2; }
.l-trend { fill: none; stroke: #d81818; stroke-width: 1.6; }
.spike { fill: none; stroke: #bcbcbc; stroke-width: 1; }
.w-r { stroke: #a04444; }
.w-c { stroke: #58e8e8; }
.w-w { stroke: #e0e0e0; }
.b-r { fill: #000; stroke: #a04444; stroke-width: .8; }
.b-c { fill: #58e8e8; }
.b-w { fill: #e0e0e0; }
.arrow { stroke: #d80f0f; stroke-width: 3; }
.lbl { fill: #8a8a8a; font-size: 10px; }
.tag { font-size: 10px; font-weight: 700; }
.tag-cai { fill: #a8c8e8; }
.tag-zhang { fill: #e8c8c8; }
.tag-yi { fill: #e8c070; }
.tag-five { fill: #a82222; font-size: 8px; }
.h { fill: #a5a5a5; font-size: 9.5px; letter-spacing: -0.25px; }
.h-o { fill: #b07a30; }
.h-r { fill: #b02020; }
.axis { fill: #7c2a2a; font-size: 10.5px; text-anchor: end; }

.dates {
  height: 12px;
  flex: none;
  position: relative;
  color: #7c2a2a;
  font-size: 10px;
  line-height: 12px;
}
.tick {
  position: absolute;
  top: 0;
  border-left: 1px solid #5c1a1a;
  padding-left: 1px;
}
.cursor-date {
  position: absolute;
  left: 790px;
  top: 0;
  width: 57px;
  background: #1a1a96;
  color: #dfe6ff;
  white-space: nowrap;
  letter-spacing: -0.3px;
}
.day-kind {
  position: absolute;
  left: 972px;
  width: 38px;
  text-align: center;
  color: #a8a8a8;
  border-left: 1px solid #6e1a1a;
  box-sizing: border-box;
}

.tabs {
  height: 14px;
  flex: none;
  display: grid;
  grid-template-columns: 22px 23px 23px 33px 32px 25px 69px 60px 42px 68px 42px 41px 71px 33px 42px 42px 24px 105px 41px 89px 10px 35px 19px 19px;
  border-top: 1px solid #5c1616;
  border-bottom: 1px solid #5c1616;
  box-sizing: border-box;
  font-size: 9.4px;
  letter-spacing: -0.3px;
  line-height: 12px;
  color: #a8a8a8;
}
.tabs span {
  border-right: 1px solid #5c1616;
  text-align: center;
  white-space: nowrap;
  overflow: hidden;
}
.tabs span.cyan { color: #35b8b8; }

.danmu {
  height: 17px;
  flex: none;
  box-sizing: border-box;
  border-bottom: 1px solid #5c1616;
  position: relative;
  line-height: 15px;
  font-size: 9.5px;
}
.danmu-hint { position: absolute; left: 5px; color: #333; letter-spacing: -0.42px; white-space: nowrap; }
.danmu-send { position: absolute; left: 919px; color: #909090; }
.danmu-set { position: absolute; left: 972px; color: #909090; }
.danmu-x { position: absolute; left: 998px; color: #707070; font-size: 12px; }
.danmu-tools {
  height: 14px;
  flex: none;
  display: flex;
  font-size: 9.5px;
  line-height: 14px;
  color: #a8a8a8;
}
.danmu-tools span {
  border-right: 1px solid #5c1616;
  padding: 0 3px 0 2px;
  white-space: nowrap;
}

/* 右侧盘口 */
.quotes {
  width: 168px;
  flex: none;
  box-sizing: border-box;
  border-left: 1px solid #6e1a1a;
  padding-top: 94px;
  display: flex;
  flex-direction: column;
  font-size: 11px;
}
.q-sec {
  border-bottom: 1px solid #6e1a1a;
}
.q-row {
  position: relative;
  height: 14.2px;
  line-height: 14.2px;
  white-space: nowrap;
}
.tall .q-row { height: 15px; line-height: 15px; }
.flows .q-row { height: 15.2px; line-height: 15.2px; }
.q-row b { position: absolute; font-size: 10.5px; }
.lab { position: absolute; left: 1px; color: #b8b8b8; font-size: 11.5px; }
.lab2 { position: absolute; left: 85px; color: #b8b8b8; font-size: 11.5px; }
.c1 { right: 85px; }
.c2 { right: 35px; }
.c3 { right: 2px; }
.fl { right: 30px; }
.c1 .down-arrow { position: absolute; left: 100%; color: #22a822; margin-left: 1px; }
.q-row em, .vol em { font-weight: 400; font-size: 11.5px; }
.q-row .red { color: #c83838; }

.trades { flex: none; height: 270px; }
.t-row {
  position: relative;
  height: 13.5px;
  line-height: 13.5px;
  font-size: 10.5px;
}
.t-row b { position: absolute; }
.time { left: 1px; color: #cfcfcf; }
.price { right: 74px; color: #22c822; }
.vol { right: 20px; color: #b9b94a; }
.vol.big { color: #9a2fa8; }
.side { right: 3px; font-size: 11px; }
.sell { color: #b02a2a; }
.side.green { color: #22a022; }

.q-tabs {
  margin-top: 4px;
  height: 14px;
  display: grid;
  grid-template-columns: repeat(8, 1fr);
  border-top: 1px solid #5c1616;
  border-bottom: 1px solid #5c1616;
  box-sizing: border-box;
  font-size: 10.5px;
  line-height: 12px;
  text-align: center;
  color: #a8a8a8;
}
.q-tabs span { border-right: 1px solid #5c1616; }
.q-tabs span.cyan { color: #35b8b8; }

/* 右边工具条 */
.rail {
  width: 17px;
  flex: none;
  background: #eef0f2;
  padding-top: 86px;
  display: flex;
  flex-direction: column;
  align-items: center;
  color: #345;
}
.r-ico, .r-box, .r-txt, .r-rsi {
  height: 17.4px;
  flex: none;
  width: 100%;
  display: flex;
  align-items: center;
  justify-content: center;
}
.r-box {
  font-size: 7.5px;
  color: #246;
  position: relative;
  z-index: 0;
}
.r-box::before {
  content: "";
  position: absolute;
  left: 2px;
  top: 2px;
  width: 13px;
  height: 13px;
  border: 1px solid #8aa;
  background: #fff;
  z-index: -1;
  box-sizing: border-box;
}
.r-box.round::before { border-radius: 6px; }
.r-rsi { font-size: 8.5px; font-weight: 700; color: #2244bb; }
.gap1 { margin-top: 4.6px; }
.gap2 { margin-top: 5.6px; }
.r-txt { font-size: 10px; color: #4a6480; }
.r-txt.on { background: #fff; border-top: 1px solid #bbb; box-sizing: border-box; }

/* 底部状态栏 */
.status {
  position: relative;
  flex: none;
  height: 17px;
  box-sizing: border-box;
  background: #f0efe8;
  border-top: 1px solid #c8c4b4;
  border-bottom: 2px solid #3b78d0;
  display: flex;
  align-items: center;
  color: #333;
  font-size: 9.5px;
  white-space: nowrap;
}
.s-cell {
  display: grid;
  grid-template-columns: 18px 45px 29px 34px 37px;
  width: 163.4px;
  flex: none;
  align-items: center;
  grid-auto-flow: column;
}
.s-cell > .s-name { grid-column: 1; font-size: 9px; }
.s-cell > b:first-of-type { grid-column: 2; }
.s-cell b { font-size: 9.7px; }
.s-chg { grid-column: 3; text-align: left; }
.s-pct { grid-column: 4; }
.s-amt { grid-column: 5; padding-left: 3px; font-size: 9.5px; letter-spacing: -0.2px; }
.up { color: #e0182c; }
.down { color: #1a8a2a; }
.s-sep { width: 1px; height: 15px; background: #b8b4a4; margin-left: -1px; margin-right: 4px; }
.s-sep2 { width: 1px; height: 15px; background: #b8b4a4; margin-left: 1px; margin-right: 3px; }
.s-meter { position: relative; width: 37px; height: 14px; flex: none; margin-right: 1px; }
.s-meter em { position: absolute; left: 0; bottom: -1px; color: #2aa02a; font-size: 9px; font-weight: 700; }
.m-r { position: absolute; left: 8px; top: 1px; width: 8px; height: 4px; background: #d82020; }
.m-g { position: absolute; left: 16px; top: 1px; width: 8px; height: 4px; background: #109040; }
.s-site { font-size: 10px; color: #333; }
.s-icons { position: absolute; left: 1116px; top: 2px; line-height: 0; }

/* 水印 */
.banner {
  position: absolute;
  left: 598px;
  top: 0;
  width: 597px;
  height: 108px;
  background: #7eacd9;
}
.ring { fill: none; stroke-width: 15; }
.red-ring { stroke: #dc5b44; }
.yellow-ring { stroke: #e9c83a; }
.ring-text { fill: #f4f7fb; font-size: 8px; font-weight: 700; font-family: "Liberation Sans", sans-serif; }
.site {
  fill: #fbfbfb;
  stroke: #fbfbfb;
  stroke-width: .7px;
  font-family: "DejaVu Serif", serif;
  font-weight: 700;
  font-size: 66px;
}

/* 区间统计对话框 */
.dialog {
  position: absolute;
  left: 364px;
  top: 115px;
  width: 234px;
  height: 243px;
  box-sizing: border-box;
  border: 3px solid #0b4fd8;
  border-top: none;
  border-radius: 5px 5px 0 0;
  background: #ece9d8;
  color: #222;
  font-size: 10.5px;
}
.d-title {
  margin: 0 -3px;
  height: 23px;
  border-radius: 5px 5px 0 0;
  background: linear-gradient(#1665ea, #0a4bd0 50%, #0a3fb8);
  color: #fff;
  font-weight: 700;
  font-size: 11px;
  display: flex;
  align-items: center;
  justify-content: space-between;
  padding: 0 2px 0 5px;
}
.d-close {
  width: 15px;
  height: 14px;
  border: 1px solid #fff;
  border-radius: 2px;
  background: #d8582e;
  line-height: 0;
}
.d-body {
  display: flex;
  padding-top: 6px;
}
.d-form { width: 137px; flex: none; margin-top: 0; }
.d-row {
  height: 15.65px;
  display: flex;
  align-items: center;
}
.d-row label { width: 48px; text-align: right; font-size: 9.2px; margin-right: 9px; white-space: nowrap; }
.d-input {
  width: 81px;
  height: 13.5px;
  box-sizing: border-box;
  background: #fff;
  border: 1px solid;
  border-color: #a8a698 #fff #fff #a8a698;
  font-size: 9.5px;
  line-height: 11.5px;
  text-align: right;
  padding-right: 2px;
  color: #555;
  letter-spacing: -0.1px;
  position: relative;
}
.d-input.date { text-align: left; padding-left: 2px; }
.d-drop {
  position: absolute;
  right: 0;
  top: 0;
  width: 13px;
  height: 11.5px;
  background: #e4e1d0;
  border-right: 1px solid #999;
  border-bottom: 1px solid #999;
  box-sizing: border-box;
}
.d-drop::after {
  content: "";
  position: absolute;
  left: 3px;
  top: 5px;
  border: 3px solid transparent;
  border-top-color: #222;
}
.d-side { margin-left: 21px; flex: 1; }
.d-stat { margin-top: 9px; font-size: 9px; line-height: 9px; }
.d-stat:first-child { margin-top: 3px; }
.d-stat p { margin: 0; display: flex; gap: 4px; white-space: nowrap; }
.d-btns {
  margin-top: 29px;
  display: flex;
  flex-direction: column;
  gap: 5px;
}
.d-btns button {
  width: 50px;
  height: 17.5px;
  box-sizing: border-box;
  padding: 0;
  background: #ece9d8;
  border: 1px solid;
  border-color: #fff #8f8d80 #8f8d80 #fff;
  outline: 1px solid #c8c5b4;
  font: 9.3px "Liberation Sans", "Noto Sans CJK SC", sans-serif;
  color: #222;
}

.popup {
  position: absolute;
  left: 1082px;
  top: 245px;
  width: 44px;
  height: 37px;
  box-sizing: border-box;
  border: 2px solid #0d4ad0;
  border-radius: 3px 3px 0 0;
  background: #ddd8cc;
}
.p-title {
  height: 14px;
  margin: -1px -2px 0;
  background: #0d4ad0;
  color: #fff;
  font: 700 9px "Liberation Serif", serif;
  letter-spacing: .5px;
  display: flex;
  align-items: center;
  justify-content: space-between;
  padding: 0 1px 0 2px;
}
.p-close {
  width: 10px;
  height: 10px;
  background: #d85a38;
  border: 1px solid #fff;
  box-sizing: border-box;
  line-height: 0;
}
.p-close svg { margin: -1px; }
.p-body { padding: 1px 1px; }
.p-body button {
  width: 38px;
  height: 17px;
  padding: 0;
  background: #e6e2d8;
  border: 1px solid #555;
  outline: 1px dotted #444;
  outline-offset: -3px;
  font: 9.5px "Liberation Sans", sans-serif;
  color: #333;
}
</style>
